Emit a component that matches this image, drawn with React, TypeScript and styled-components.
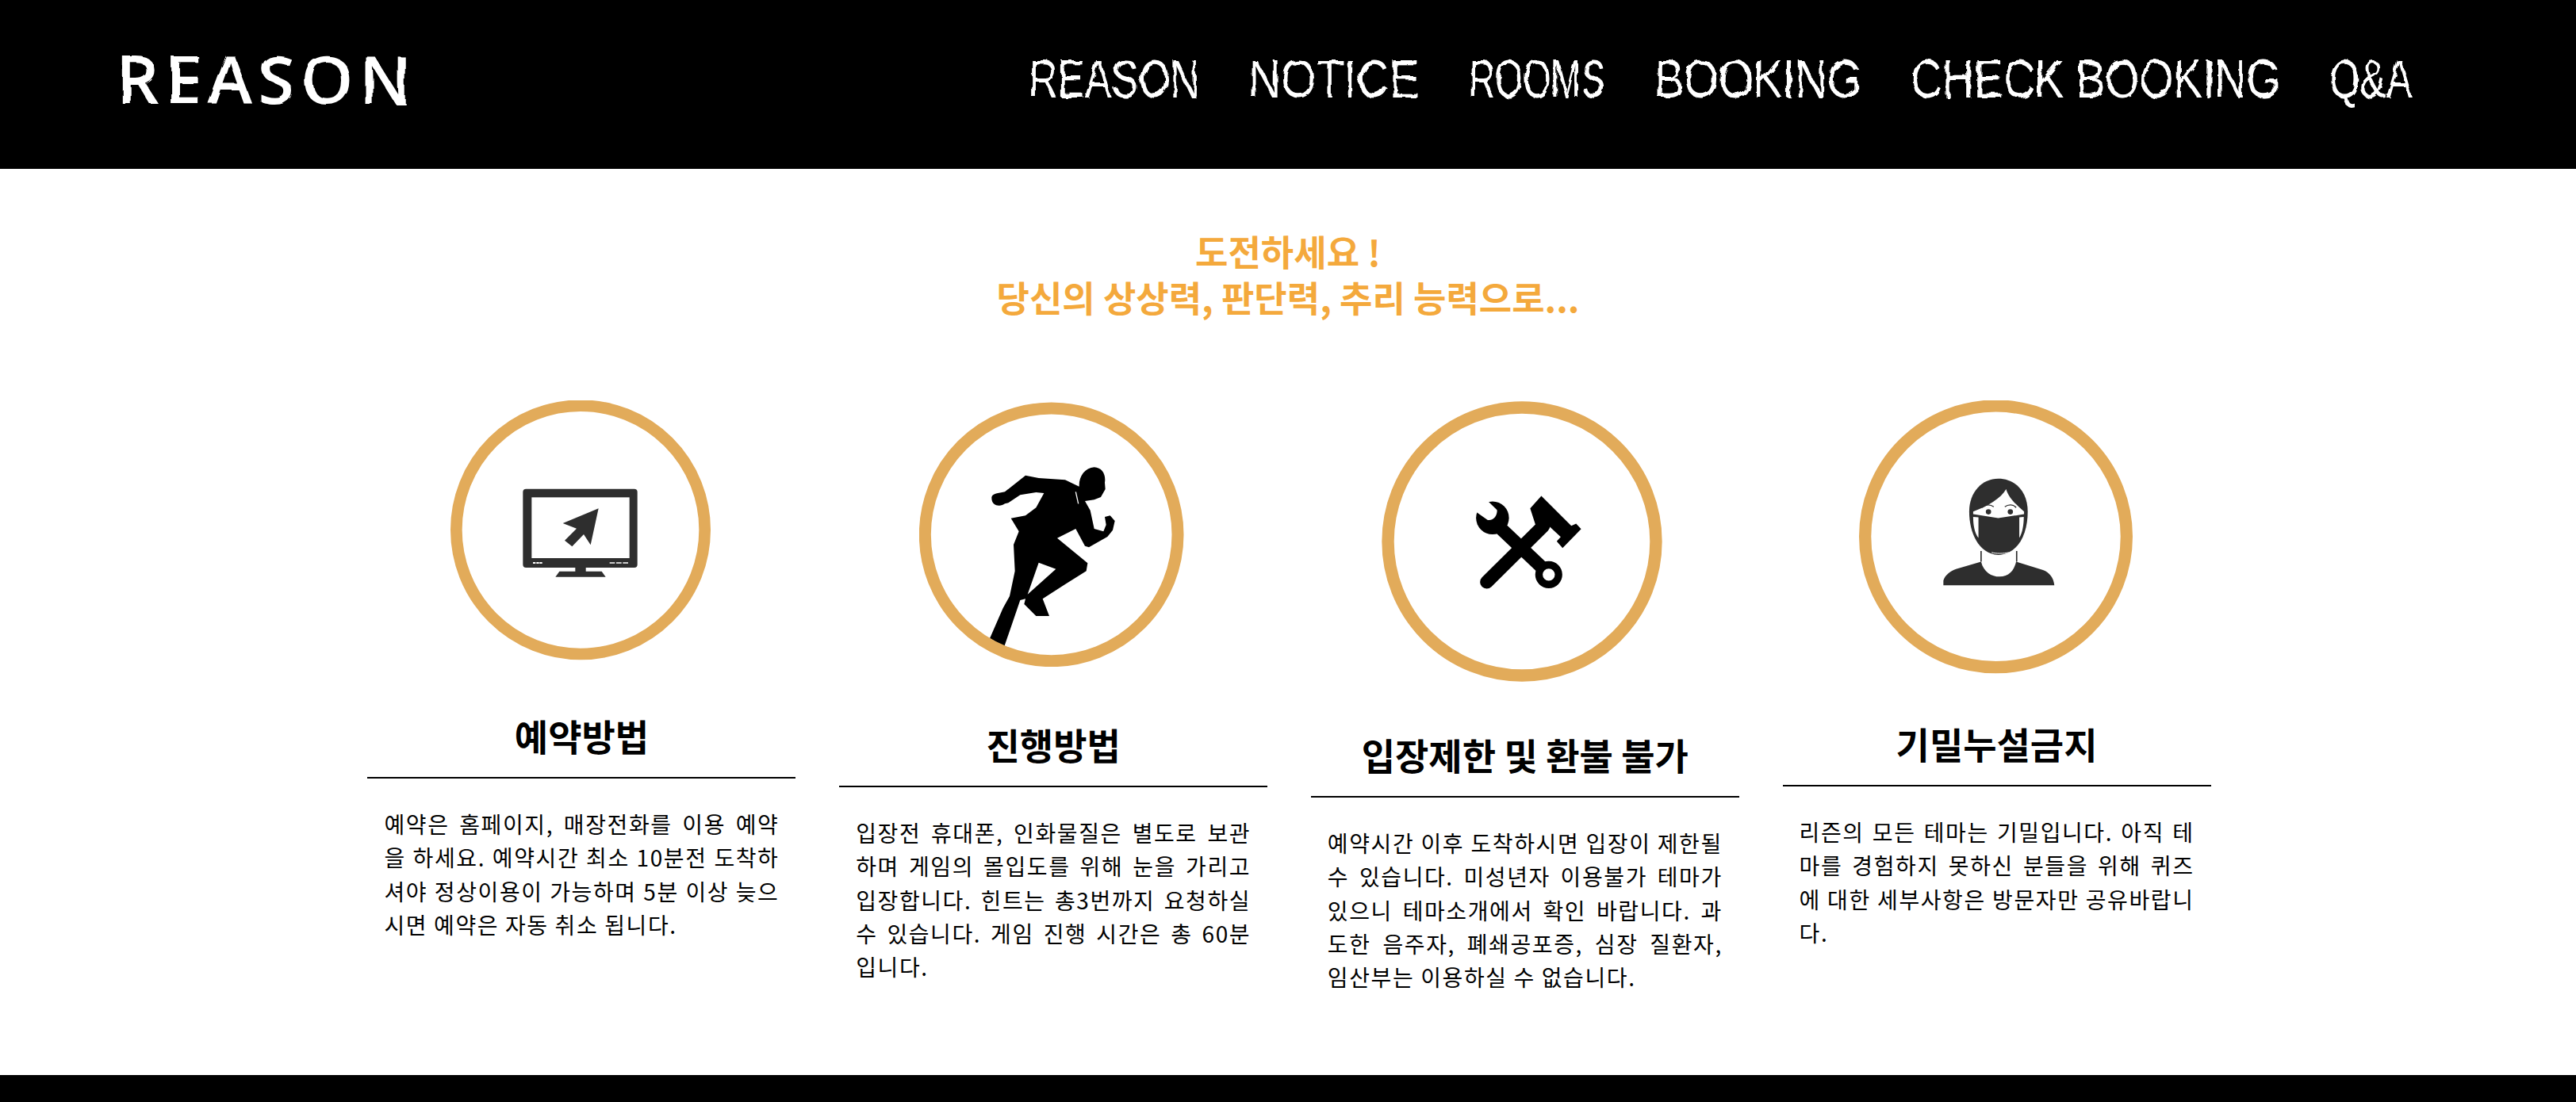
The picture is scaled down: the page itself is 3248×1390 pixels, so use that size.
import styled, { createGlobalStyle } from 'styled-components'

const RING = '#e2ab5a'
const INK = '#2e2e2e'

const GlobalStyle = createGlobalStyle`
  html, body {
    margin: 0;
    padding: 0;
    background: #fff;
  }

  * {
    box-sizing: border-box;
  }
`

const Page = styled.div`
  display: flex;
  flex-direction: column;
  height: 1390px;
  overflow: hidden;
  font-family: 'Noto Sans CJK KR', 'Noto Sans', sans-serif;
  color: #000;
`

const Header = styled.header`
  display: flex;
  align-items: center;
  justify-content: space-between;
  height: 213px;
  padding: 0 206px 16px 147px;
  background: #000;
`

const Logo = styled.a`
  font-family: 'Open Sans', sans-serif;
  font-size: 84px;
  font-weight: 600;
  line-height: 1;
  letter-spacing: 7.5px;
  color: #fff;
  filter: url(#brush);
`

const Nav = styled.nav`
  display: flex;
  align-items: center;
  gap: 62px;
`

const NavLink = styled.a<{ $width: number }>`
  display: block;
  width: ${({ $width }) => $width}px;
  color: #fff;
  filter: url(#scratch);
`

const NavLabel = styled.span<{ $squeeze: number }>`
  display: inline-block;
  font-family: 'Liberation Sans', sans-serif;
  font-size: 68px;
  font-weight: 400;
  line-height: 1;
  white-space: nowrap;
  transform-origin: 0 50%;
  transform: scaleX(${({ $squeeze }) => $squeeze});
`

const FilterDefs = styled.svg`
  position: absolute;
  width: 0;
  height: 0;
`

const Content = styled.main`
  flex: 1;
  padding-top: 75px;
`

const Lead = styled.h2`
  margin: 0;
  font-size: 45px;
  font-weight: 700;
  line-height: 58px;
  text-align: center;
  color: #f4a93c;
`

const Cards = styled.section`
  display: grid;
  grid-template-columns: repeat(4, 540px);
  justify-content: center;
  column-gap: 54.7px;
  margin-top: 101px;
  padding-left: 3px;
`

const Card = styled.article<{ $top: number }>`
  display: flex;
  flex-direction: column;
  align-items: center;
  padding-top: ${({ $top }) => $top}px;
`

const Badge = styled.svg<{ $size: number; $gap: number; $nudge: number }>`
  display: block;
  width: ${({ $size }) => $size}px;
  height: ${({ $size }) => $size}px;
  margin: 0 ${({ $nudge }) => $nudge}px ${({ $gap }) => $gap}px 0;
`

const CardTitle = styled.h3`
  align-self: stretch;
  margin: 0;
  padding-bottom: 21px;
  border-bottom: 2px solid #000;
  font-size: 46px;
  font-weight: 700;
  line-height: 63px;
  text-align: center;
`

const CardText = styled.p`
  margin: 0;
  padding: 36px 21px 0;
  font-size: 28px;
  font-weight: 400;
  line-height: 42.3px;
  letter-spacing: 1.6px;
  text-align: justify;
`

const Footer = styled.footer`
  height: 34px;
  background: #000;
`

const MonitorBadge = () => (
  <Badge $size={328} $gap={63} $nudge={2} viewBox="88 75 984 984">
    <circle cx="580" cy="565" r="470" fill="none" stroke={RING} strokeWidth="44" />
    <rect x="362" y="410" width="433" height="298" rx="12" fill={INK} />
    <rect x="395" y="442" width="370" height="230" fill="#fff" />
    <path d="M400 687h10v6h-10zM413 687h10v6h-10zM425 687h10v6h-10zM690 688h20v4h-20zM715 688h20v4h-20zM740 688h20v4h-20z" fill="#fff" />
    <path d="M560 708h40v14h60l15 21H485l15-21h60z" fill={INK} />
    <path d="M648 484 513 540l52 20-45 45 28 23 44-46 26 40z" fill={INK} />
  </Badge>
)

const RunnerBadge = () => (
  <Badge $size={334} $gap={66} $nudge={4} viewBox="88 80 1002 1002">
    <path
      fillRule="evenodd"
      d="M362 440C365 425 395 425 412 420L490 358L540 368L640 375L693 400C692 360 715 330 750 327C780 328 795 355 790 385L792 410L775 440L750 450L715 455L735 490L750 560L785 570L795 545L790 515L810 510L828 530L820 565L800 590L730 630L715 625L680 560L610 595L725 690L720 720L640 770L555 825L580 890L530 890L485 845L490 825L470 830L410 1005L355 975L405 860L430 815L450 720L445 620L465 570L435 520L490 510L530 480L560 425L530 422L470 432L425 462L412 465C395 478 360 475 362 440ZM540 688 605 712 498 808Z"
      fill="#000"
    />
    <path d="M680 420 690 465" stroke="#fff" strokeWidth="4" fill="none" />
    <circle cx="588" cy="582" r="478" fill="none" stroke={RING} strokeWidth="45" />
  </Badge>
)

const ToolsBadge = () => (
  <Badge $size={354} $gap={60} $nudge={8} viewBox="70 78 1058 1058">
    <circle cx="599" cy="607" r="505" fill="none" stroke={RING} strokeWidth="46" />
    <path d="M466 760 680 548" stroke="#000" strokeWidth="50" strokeLinecap="round" fill="none" />
    <path d="M630 482 672 435 785 548 803 540 822 560 752 632 730 606 745 590 700 548 655 560Z" fill="#000" />
    <path d="M490 530 690 720" stroke="#000" strokeWidth="50" fill="none" />
    <circle cx="488" cy="518" r="62" fill="#000" />
    <path d="M418 490 462 446 505 488C507 510 490 530 470 526Z" fill="#fff" />
    <circle cx="700" cy="732" r="37" fill="#fff" stroke="#000" strokeWidth="28" />
  </Badge>
)

const MaskBadge = () => (
  <Badge $size={345} $gap={56} $nudge={2} viewBox="72 68 1038 1038">
    <circle cx="591" cy="585" r="496" fill="none" stroke={RING} strokeWidth="46" />
    <path d="M490 490C490 415 540 365 600 365C665 365 712 415 712 490C712 570 680 650 600 655C525 650 490 570 490 490Z" fill={INK} />
    <path d="M505 490C560 470 610 440 630 405C640 440 670 465 698 490L698 500L600 515L505 500Z" fill="#fff" />
    <path d="M505 510 525 512 525 590C510 570 505 540 505 510ZM697 510 680 512 680 590C692 570 697 540 697 510Z" fill="#fff" />
    <circle cx="563" cy="491" r="10" fill={INK} />
    <circle cx="646" cy="491" r="10" fill={INK} />
    <path d="M538 475C550 462 570 462 583 472M625 472C638 462 658 462 668 475" stroke={INK} strokeWidth="4" fill="none" />
    <path d="M575 645C590 650 620 650 640 645" stroke="#fff" strokeWidth="3" fill="none" />
    <path d="M535 640V680M670 640V680" stroke={INK} strokeWidth="5" fill="none" />
    <path d="M392 770V752C398 730 420 715 440 708L535 680C545 720 575 737 605 737C640 737 660 715 668 680L770 712C795 722 810 740 813 770Z" fill={INK} />
  </Badge>
)

const NAV_ITEMS = [
  { label: 'REASON', width: 215, squeeze: 0.749 },
  { label: 'NOTICE', width: 216, squeeze: 0.84 },
  { label: 'ROOMS', width: 172, squeeze: 0.67 },
  { label: 'BOOKING', width: 261, squeeze: 0.823 },
  { label: 'CHECK BOOKING', width: 466, squeeze: 0.812 },
  { label: 'Q&A', width: 105, squeeze: 0.73 },
]

const CARDS = [
  {
    top: 0,
    title: '예약방법',
    badge: <MonitorBadge />,
    text: '예약은 홈페이지, 매장전화를 이용 예약을 하세요. 예약시간 최소 10분전 도착하셔야 정상이용이 가능하며 5분 이상 늦으시면 예약은 자동 취소 됩니다.',
  },
  {
    top: 2,
    title: '진행방법',
    badge: <RunnerBadge />,
    text: '입장전 휴대폰, 인화물질은 별도로 보관하며 게임의 몰입도를 위해 눈을 가리고 입장합니다. 힌트는 총3번까지 요청하실 수 있습니다. 게임 진행 시간은 총 60분입니다.',
  },
  {
    top: 1,
    title: '입장제한 및 환불 불가',
    badge: <ToolsBadge />,
    text: '예약시간 이후 도착하시면 입장이 제한될 수 있습니다. 미성년자 이용불가 테마가 있으니 테마소개에서 확인 바랍니다. 과도한 음주자, 폐쇄공포증, 심장 질환자, 임산부는 이용하실 수 없습니다.',
  },
  {
    top: -2,
    title: '기밀누설금지',
    badge: <MaskBadge />,
    text: '리즌의 모든 테마는 기밀입니다. 아직 테마를 경험하지 못하신 분들을 위해 퀴즈에 대한 세부사항은 방문자만 공유바랍니다.',
  },
]

const App = () => {
  return (
    <Page>
      <GlobalStyle />
      <FilterDefs aria-hidden="true">
        <filter id="scratch" x="-5%" y="-20%" width="110%" height="140%">
          <feTurbulence type="fractalNoise" baseFrequency="0.07" numOctaves="2" seed="4" />
          <feDisplacementMap in="SourceGraphic" scale="7" />
        </filter>
        <filter id="brush" x="-5%" y="-20%" width="110%" height="140%">
          <feTurbulence type="fractalNoise" baseFrequency="0.03" numOctaves="2" seed="8" />
          <feDisplacementMap in="SourceGraphic" scale="7" />
        </filter>
      </FilterDefs>
      <Header>
        <Logo>REASON</Logo>
        <Nav>
          {NAV_ITEMS.map((item) => (
            <NavLink key={item.label} $width={item.width}>
              <NavLabel $squeeze={item.squeeze}>{item.label}</NavLabel>
            </NavLink>
          ))}
        </Nav>
      </Header>
      <Content>
        <Lead>
          도전하세요 !
          <br />
          당신의 상상력, 판단력, 추리 능력으로...
        </Lead>
        <Cards>
          {CARDS.map((card) => (
            <Card key={card.title} $top={card.top}>
              {card.badge}
              <CardTitle>{card.title}</CardTitle>
              <CardText>{card.text}</CardText>
            </Card>
          ))}
        </Cards>
      </Content>
      <Footer />
    </Page>
  )
}

export default App
